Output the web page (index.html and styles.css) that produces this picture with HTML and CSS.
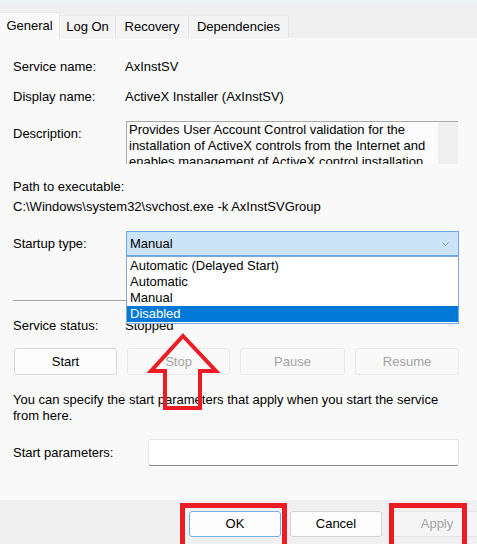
FILE: index.html
```html
<!DOCTYPE html>
<html>
<head>
<meta charset="utf-8">
<title>AxInstSV Properties</title>
<link rel="stylesheet" href="styles.css">
</head>
<body>
<div class="window">
  <div class="topband"></div>
  <div class="tabstrip">
    <div class="tab tab-general active">General</div>
    <div class="tab tab-logon">Log On</div>
    <div class="tab tab-recovery">Recovery</div>
    <div class="tab tab-deps">Dependencies</div>
  </div>
  <div class="panel">
    <div class="row r-name"><span class="label">Service name:</span><span class="value">AxInstSV</span></div>
    <div class="row r-display"><span class="label">Display name:</span><span class="value">ActiveX Installer (AxInstSV)</span></div>
    <div class="row r-desc">
      <span class="label desc-label">Description:</span>
      <div class="descbox">
        <div class="desctext">Provides User Account Control validation for the installation of ActiveX controls from the Internet and enables management of ActiveX control installation</div>
        <div class="scrollbar"></div>
      </div>
    </div>
    <div class="path-label">Path to executable:</div>
    <div class="path">C:\Windows\system32\svchost.exe -k AxInstSVGroup</div>
    <div class="row r-startup">
      <span class="label">Startup type:</span>
      <div class="combo-wrap">
        <div class="combo"><span>Manual</span>
          <svg class="chev" width="7" height="4" viewBox="0 0 7 4"><polyline points="0.5,0.5 3.5,3.5 6.5,0.5" fill="none" stroke="#9a9a9a" stroke-width="1"/></svg>
        </div>
        <ul class="dropdown">
          <li>Automatic (Delayed Start)</li>
          <li>Automatic</li>
          <li>Manual</li>
          <li class="selected">Disabled</li>
        </ul>
      </div>
    </div>
    <div class="separator"></div>
    <div class="row r-status"><span class="label">Service status:</span><span class="value">Stopped</span></div>
    <div class="buttons">
      <button class="btn">Start</button>
      <button class="btn disabled">Stop</button>
      <button class="btn disabled">Pause</button>
      <button class="btn disabled">Resume</button>
    </div>
    <p class="hint">You can specify the start parameters that apply when you start the service from here.</p>
    <div class="row r-params"><span class="label">Start parameters:</span><div class="input"></div></div>
  </div>
  <div class="footer">
    <button class="fbtn default">OK</button>
    <button class="fbtn">Cancel</button>
    <button class="fbtn disabled">Apply</button>
  </div>
  <div class="mark mark-ok"></div>
  <div class="mark mark-apply"></div>
  <svg class="arrow" width="477" height="544" viewBox="0 0 477 544">
    <polygon points="183,336 216,371 200,371 200,408 165,408 165,371 151,371" fill="none" stroke="#ed1c24" stroke-width="4" stroke-linejoin="miter"/>
  </svg>
</div>
</body>
</html>
```

FILE: styles.css
```css
html, body {
  margin: 0;
  padding: 0;
}
body {
  width: 477px;
  height: 544px;
  overflow: hidden;
  font-family: "Liberation Sans", Arial, sans-serif;
  font-size: 13px;
  line-height: 16px;
  color: #000;
  background: #f9f9f9;
}
.window {
  position: relative;
  width: 477px;
  height: 544px;
  overflow: hidden;
  display: flex;
  flex-direction: column;
}
.topband {
  flex: none;
  height: 3px;
  background: #eef3f8;
}
.tabstrip {
  flex: none;
  height: 35px;
  background: #f0f0f0;
  display: flex;
  align-items: flex-end;
}
.tab {
  box-sizing: border-box;
  height: 22px;
  line-height: 22px;
  margin-bottom: 1px;
  text-align: center;
  background: #f4f4f4;
  border-right: 1px solid #e3e3e3;
  border-top: 1px solid #ebebeb;
}
.tab.active {
  height: 26px;
  line-height: 25px;
  margin-bottom: 0;
  background: #f9f9f9;
  border-top: 1px solid #e8e8e8;
  border-right: 1px solid #e6e6e6;
}
.tab-general { width: 60px; }
.tab-logon { width: 56px; }
.tab-recovery { width: 73px; }
.tab-deps { width: 100px; }

.panel {
  box-sizing: border-box;
  height: 462px;
  padding: 0 18px 0 13px;
  display: flex;
  flex-direction: column;
}
.row {
  display: grid;
  grid-template-columns: 112px 1fr;
}
.r-name { margin-top: 21px; }
.r-display { margin-top: 14px; }
.r-desc {
  margin-top: 16px;
  grid-template-columns: 113px 1fr;
  align-items: start;
}
.desc-label { margin-top: 5px; }
.descbox {
  box-sizing: border-box;
  width: 332px;
  height: 43px;
  display: flex;
  overflow: hidden;
  border-top: 1px solid #a9a9a9;
  border-left: 1px solid #a9a9a9;
  background: #fbfbfb;
}
.desctext {
  flex: 1;
  height: 42px;
  overflow: hidden;
  padding: 0 0 0 2px;
}
.scrollbar {
  flex: none;
  width: 20px;
  background: #f0f0f0;
}
.path-label { margin-top: 15px; }
.path { margin-top: 4px; }

.r-startup {
  margin-top: 16px;
  grid-template-columns: 113px 1fr;
  align-items: center;
}
.combo-wrap {
  position: relative;
}
.combo {
  box-sizing: border-box;
  height: 25px;
  padding: 0 9px 0 3px;
  display: flex;
  align-items: center;
  justify-content: space-between;
  background: #cce4f7;
  border: 1px solid #6aa8e6;
}
.chev { display: block; }
.dropdown {
  position: absolute;
  z-index: 2;
  top: 100%;
  left: 0;
  right: 0;
  margin: 0;
  padding: 1px 0;
  list-style: none;
  background: #fff;
  border: 1px solid #7fa9d8;
}
.dropdown li {
  height: 16px;
  line-height: 16px;
  padding-left: 3px;
}
.dropdown li.selected {
  background: #0078d7;
  color: #fff;
}
.separator {
  margin-top: 44px;
  height: 0;
  border-top: 1px solid #a0a0a0;
  border-bottom: 1px solid #ffffff;
}
.r-status { margin-top: 16px; }

.buttons {
  margin-top: 14px;
  margin-left: 1px;
  display: grid;
  grid-template-columns: 103px 103px 105px 104px;
  column-gap: 10px;
}
.btn {
  box-sizing: border-box;
  height: 27px;
  margin: 0;
  padding: 0;
  font: inherit;
  color: #000;
  background: #fdfdfd;
  border: 1px solid #d6d6d6;
  border-radius: 3px;
}
.btn.disabled {
  color: #a3a3a3;
  background: #f9f9f9;
  border-color: #ebebeb;
}
.hint {
  margin: 17px 0 0;
}
.r-params {
  margin-top: 15px;
  grid-template-columns: 135px 1fr;
  align-items: center;
}
.input {
  box-sizing: border-box;
  height: 27px;
  background: #fff;
  border: 1px solid #e6e6e6;
  border-bottom-color: #8a8a8a;
  border-radius: 3px;
}

.footer {
  flex: none;
  box-sizing: border-box;
  height: 44px;
  padding: 11px 0 0 189px;
  background: #f0f0f0;
  display: flex;
  align-items: flex-start;
  gap: 9px;
}
.fbtn {
  flex: none;
  box-sizing: border-box;
  width: 92px;
  height: 26px;
  margin: 0;
  padding: 0;
  font: inherit;
  color: #000;
  background: #fdfdfd;
  border: 1px solid #d3d3d3;
  border-radius: 3px;
}
.fbtn.default {
  border-color: #78aee6;
}
.fbtn.disabled {
  color: #a3a3a3;
  background: #f5f5f5;
  border-color: #e6e6e6;
}
.mark {
  position: absolute;
  z-index: 3;
  top: 503px;
  height: 50px;
  box-sizing: border-box;
  border: 5px solid #ed1c24;
}
.mark-ok { left: 180px; width: 107px; }
.mark-apply { left: 389px; width: 78px; }
.arrow {
  position: absolute;
  z-index: 4;
  left: 0;
  top: 0;
  pointer-events: none;
}
```
